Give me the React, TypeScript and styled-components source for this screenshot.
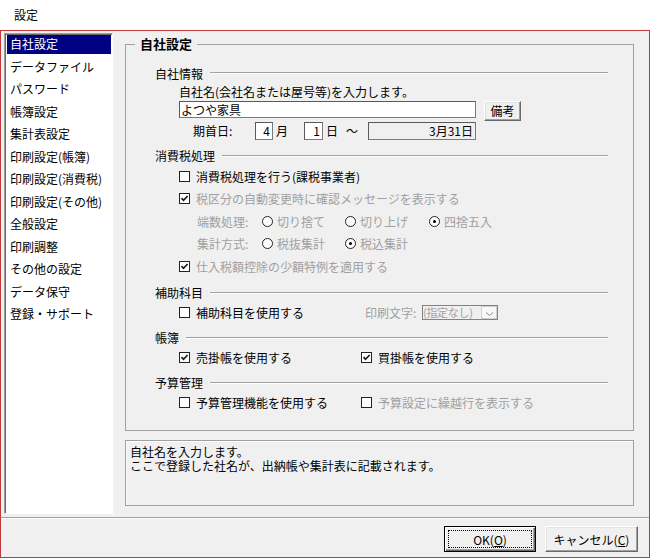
import React from 'react';
import styled, { createGlobalStyle, css } from 'styled-components';

const colors = {
    face: '#f0f0f0',
    shadow: '#a0a0a0',
    dark: '#696969',
    gray: '#a0a0a0',
    frame: '#c1393b',
    navy: '#000080',
    edge: '#7a7a7a',
};

const GlobalStyle = createGlobalStyle`
    * { box-sizing: border-box; }
    html, body { margin: 0; padding: 0; background: #fff; }
    body {
        font-family: "Noto Sans CJK JP", "Noto Sans", sans-serif;
        font-size: 12px;
        color: #000;
    }
`;

const menu = [
    '自社設定',
    'データファイル',
    'パスワード',
    '帳簿設定',
    '集計表設定',
    '印刷設定(帳簿)',
    '印刷設定(消費税)',
    '印刷設定(その他)',
    '全般設定',
    '印刷調整',
    'その他の設定',
    'データ保守',
    '登録・サポート',
];

function CheckBox({ checked }: { checked?: boolean }) {
    return (
        <Box>
            {checked && (
                <svg width="9" height="9" viewBox="0 0 9 9">
                    <path d="M1.5 4.2 L3.5 6.3 L7.6 2" fill="none" stroke="#1a1a1a" strokeWidth="1.7" />
                </svg>
            )}
        </Box>
    );
}

type OptProps = {
    label: string;
    checked?: boolean;
    disabled?: boolean;
    radio?: boolean;
    width?: number;
};

function Opt({ label, checked, disabled, radio, width }: OptProps) {
    return (
        <Option $w={width} $disabled={disabled} $radio={radio}>
            {radio ? <RadioDot $on={!!checked} /> : <CheckBox checked={checked} />}
            <span>{label}</span>
        </Option>
    );
}

export default function App() {
    return (
        <Window>
            <GlobalStyle />
            <TitleBar>設定</TitleBar>
            <Frame>
                <Main>
                    <NavList>
                        {menu.map((m, i) => (
                            <NavItem key={m}>
                                <NavLabel $selected={i === 0}>{m}</NavLabel>
                            </NavItem>
                        ))}
                    </NavList>
                    <RightCol>
                        <Group>
                            <GroupTitle>自社設定</GroupTitle>
                            <GroupBody>
                                <SectionHead $top={9.5}>自社情報</SectionHead>
                                <SectionBody>
                                    <Note>自社名(会社名または屋号等)を入力します。</Note>
                                    <InputRow>
                                        <TextField $w={297} $h={17} defaultValue="よつや家具" />
                                        <PushButton>備考</PushButton>
                                    </InputRow>
                                    <DateRow>
                                        <DateLabel>期首日:</DateLabel>
                                        <TextField $w={18} $h={18} $right defaultValue="4" />
                                        <Unit $w={31}>月</Unit>
                                        <TextField $w={19} $h={18} $right defaultValue="1" />
                                        <Unit $w={20}>日</Unit>
                                        <Unit $w={25}>〜</Unit>
                                        <TextField $w={108} $h={18} $right $readOnly readOnly defaultValue="3月31日" />
                                    </DateRow>
                                </SectionBody>

                                <SectionHead $top={7.5}>消費税処理</SectionHead>
                                <SectionBody $first={1}>
                                    <OptRow>
                                        <Opt label="消費税処理を行う(課税事業者)" />
                                    </OptRow>
                                    <OptRow>
                                        <Opt label="税区分の自動変更時に確認メッセージを表示する" checked disabled />
                                    </OptRow>
                                    <OptRow $indent={18}>
                                        <FieldLabel $w={65}>端数処理:</FieldLabel>
                                        <Opt radio disabled width={83} label="切り捨て" />
                                        <Opt radio disabled width={84} label="切り上げ" />
                                        <Opt radio disabled checked label="四捨五入" />
                                    </OptRow>
                                    <OptRow $indent={18}>
                                        <FieldLabel $w={65}>集計方式:</FieldLabel>
                                        <Opt radio disabled width={83} label="税抜集計" />
                                        <Opt radio disabled checked label="税込集計" />
                                    </OptRow>
                                    <OptRow>
                                        <Opt label="仕入税額控除の少額特例を適用する" checked disabled />
                                    </OptRow>
                                </SectionBody>

                                <SectionHead $top={6.5}>補助科目</SectionHead>
                                <SectionBody>
                                    <OptRow $h={23}>
                                        <Opt width={186} label="補助科目を使用する" />
                                        <FieldLabel $w={57}>印刷文字:</FieldLabel>
                                        <Combo>
                                            <ComboText>(指定なし)</ComboText>
                                            <ComboButton>
                                                <svg width="9" height="6" viewBox="0 0 9 6">
                                                    <path d="M1 1.5 L4.5 4.5 L8 1.5" fill="none" stroke="#8a8a8a" strokeWidth="1" />
                                                </svg>
                                            </ComboButton>
                                        </Combo>
                                    </OptRow>
                                </SectionBody>

                                <SectionHead $top={5}>帳簿</SectionHead>
                                <SectionBody>
                                    <OptRow $h={23}>
                                        <Opt width={182} checked label="売掛帳を使用する" />
                                        <Opt checked label="買掛帳を使用する" />
                                    </OptRow>
                                </SectionBody>

                                <SectionHead $top={5}>予算管理</SectionHead>
                                <SectionBody>
                                    <OptRow $h={23}>
                                        <Opt width={182} label="予算管理機能を使用する" />
                                        <Opt disabled label="予算設定に繰越行を表示する" />
                                    </OptRow>
                                </SectionBody>
                            </GroupBody>
                        </Group>
                        <DescBox>
                            <DescLine>自社名を入力します。</DescLine>
                            <DescLine>ここで登録した社名が、出納帳や集計表に記載されます。</DescLine>
                        </DescBox>
                    </RightCol>
                </Main>
                <Separator />
                <ButtonBar>
                    <DialogButton $w={92} $default>
                        OK(<u>O</u>)
                    </DialogButton>
                    <DialogButton $w={93}>
                        キャンセル(<u>C</u>)
                    </DialogButton>
                </ButtonBar>
            </Frame>
        </Window>
    );
}

const Window = styled.div`
    width: 650px;
    height: 559px;
    background: #fff;
    display: flex;
    flex-direction: column;
`;

const TitleBar = styled.div`
    height: 30px;
    display: flex;
    align-items: center;
    padding-left: 14px;
    font-size: 12px;
    line-height: 14px;
`;

const Frame = styled.div`
    height: 528px;
    border: 1px solid ${colors.frame};
    background: ${colors.face};
    display: flex;
    flex-direction: column;
`;

const Main = styled.div`
    height: 486px;
    display: flex;
    align-items: flex-start;
    gap: 12px;
    padding: 2px 0 0 3px;
`;

const NavList = styled.ul`
    width: 109px;
    height: 481px;
    margin: 0;
    padding: 1px 1px 0 2px;
    list-style: none;
    background: #fff;
    border: 1px solid;
    border-color: ${colors.shadow} #fff #fff ${colors.shadow};
    box-shadow: inset 1px 1px 0 ${colors.dark};
`;

const NavItem = styled.li`
    height: 22.5px;
`;

const NavLabel = styled.span<{ $selected: boolean }>`
    display: block;
    height: 19px;
    line-height: 17px;
    padding-left: 3px;
    white-space: nowrap;
    ${({ $selected }) =>
        $selected &&
        css`
            background: ${colors.navy};
            color: #fff;
        `}
`;

const RightCol = styled.div`
    width: 509px;
    display: flex;
    flex-direction: column;
    gap: 9px;
`;

const Group = styled.fieldset`
    margin: 0;
    padding: 0;
    min-width: 0;
    height: 398px;
    border: 1px solid ${colors.shadow};
`;

const GroupTitle = styled.legend`
    margin-left: 9px;
    padding: 0 5px;
    font-size: 13px;
    font-weight: bold;
    line-height: 22px;
`;

const GroupBody = styled.div`
    padding: 0 25px 0 29px;
    display: flex;
    flex-direction: column;
`;

const SectionHead = styled.div<{ $top: number }>`
    display: flex;
    align-items: center;
    gap: 7px;
    height: 17px;
    line-height: 17px;
    margin-top: ${({ $top }) => $top}px;
    white-space: nowrap;

    &::after {
        content: '';
        flex: 1;
        border-top: 1px solid ${colors.shadow};
        border-bottom: 1px solid #fff;
    }
`;

const SectionBody = styled.div<{ $first?: number }>`
    display: flex;
    flex-direction: column;
    padding-left: 24px;
    padding-top: ${({ $first }) => $first ?? 0}px;
`;

const Note = styled.div`
    height: 19px;
    line-height: 19px;
`;

const InputRow = styled.div`
    height: 21px;
    display: flex;
    align-items: flex-start;
    gap: 8px;
`;

const TextField = styled.input<{ $w: number; $h: number; $right?: boolean; $readOnly?: boolean }>`
    width: ${({ $w }) => $w}px;
    height: ${({ $h }) => $h}px;
    margin: 0;
    padding: 0 2px 0 1px;
    font: inherit;
    font-size: 12px;
    color: #000;
    border: 1px solid ${colors.edge};
    border-top-color: #5a5a5a;
    border-left-color: #5a5a5a;
    background: ${({ $readOnly }) => ($readOnly ? colors.face : '#fff')};
    text-align: ${({ $right }) => ($right ? 'right' : 'left')};
    outline: none;
`;

const bevel = css`
    background: ${colors.face};
    border: 1px solid;
    border-color: #fff ${colors.dark} ${colors.dark} #fff;
    box-shadow: inset -1px -1px 0 ${colors.shadow}, inset 1px 1px 0 #e3e3e3;
    font: inherit;
    font-size: 12px;
    color: #000;
    padding: 0;
`;

const PushButton = styled.button`
    ${bevel};
    width: 37px;
    height: 20px;
`;

const DateRow = styled.div`
    height: 18px;
    display: flex;
    align-items: center;
`;

const DateLabel = styled.span`
    margin-left: 14px;
    width: 62px;
`;

const Unit = styled.span<{ $w: number }>`
    width: ${({ $w }) => $w}px;
    padding-left: 3px;
`;

const OptRow = styled.div<{ $h?: number; $indent?: number }>`
    height: ${({ $h }) => $h ?? 22.5}px;
    display: flex;
    align-items: center;
    padding-left: ${({ $indent }) => $indent ?? 0}px;
    white-space: nowrap;
`;

const Option = styled.label<{ $w?: number; $disabled?: boolean; $radio?: boolean }>`
    display: inline-flex;
    align-items: center;
    gap: ${({ $radio }) => ($radio ? 4 : 6)}px;
    width: ${({ $w }) => ($w ? `${$w}px` : 'auto')};
    flex: none;
    color: ${({ $disabled }) => ($disabled ? colors.gray : '#000')};
`;

const Box = styled.span`
    width: 11px;
    height: 11px;
    flex: none;
    border: 1px solid #222;
    background: #fff;
    display: inline-flex;
    align-items: center;
    justify-content: center;
`;

const RadioDot = styled.span<{ $on: boolean }>`
    width: 11px;
    height: 11px;
    flex: none;
    border-radius: 50%;
    border: 1px solid #222;
    background: #fff;
    display: inline-flex;
    align-items: center;
    justify-content: center;

    &::after {
        content: '';
        width: 3px;
        height: 3px;
        border-radius: 50%;
        background: ${({ $on }) => ($on ? '#000' : 'transparent')};
    }
`;

const FieldLabel = styled.span<{ $w: number }>`
    width: ${({ $w }) => $w}px;
    flex: none;
    color: ${colors.gray};
`;

const Combo = styled.div`
    width: 76px;
    height: 15px;
    display: flex;
    align-items: stretch;
    border: 1px solid #828282;
    background: ${colors.face};
`;

const ComboText = styled.span`
    flex: 1;
    color: ${colors.gray};
    font-size: 11px;
    letter-spacing: -0.3px;
    line-height: 13px;
    white-space: nowrap;
`;

const ComboButton = styled.span`
    width: 16px;
    border: 1px solid #d0d0d0;
    background: #f8f8f8;
    display: flex;
    align-items: flex-end;
    justify-content: center;
    padding-bottom: 1px;
`;

const DescBox = styled.div`
    height: 66px;
    padding: 4px 4px;
    border: 1px solid ${colors.shadow};
    box-shadow: inset 1px 1px 0 #fff;
`;

const DescLine = styled.div`
    height: 14px;
    line-height: 14px;
    white-space: nowrap;
`;

const Separator = styled.div`
    height: 2px;
    border-top: 1px solid ${colors.shadow};
    border-bottom: 1px solid #fff;
`;

const ButtonBar = styled.div`
    display: flex;
    justify-content: flex-end;
    gap: 9px;
    padding: 7px 11px 0 0;
`;

const DialogButton = styled.button<{ $w: number; $default?: boolean }>`
    ${bevel};
    width: ${({ $w }) => $w}px;
    height: 26px;

    u {
        text-underline-offset: 1px;
    }

    ${({ $default }) =>
        $default &&
        css`
            border: 1px solid #000;
            box-shadow: inset 1px 1px 0 #fff, inset -1px -1px 0 ${colors.dark}, inset -2px -2px 0 ${colors.shadow};
            outline: 1px dotted #000;
            outline-offset: -5px;
        `}
`;
